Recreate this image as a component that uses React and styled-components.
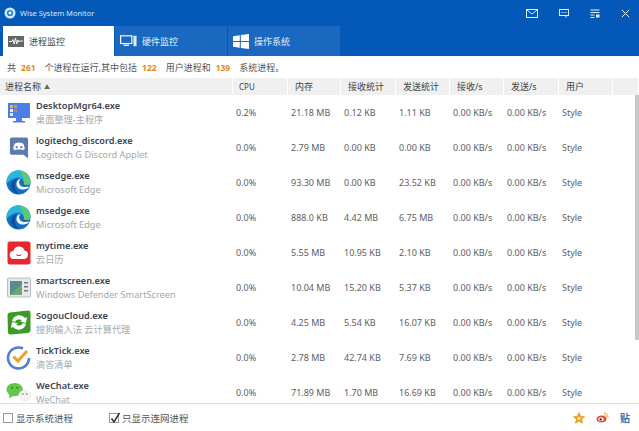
import React from 'react';
import styled, { createGlobalStyle } from 'styled-components';

const GlobalStyle = createGlobalStyle`
  html, body {
    margin: 0;
    padding: 0;
    background: #fff;
    overflow: hidden;
  }
  * { box-sizing: border-box; }
`;

const Window = styled.div`
  width: 639px;
  height: 431px;
  display: flex;
  flex-direction: column;
  font-family: "Noto Sans", "Noto Sans CJK SC", sans-serif;
  font-size: 9px;
  color: #555;
  background: #fff;
  overflow: hidden;
`;

const TitleBar = styled.div`
  height: 26px;
  flex: none;
  display: flex;
  align-items: center;
  padding-left: 4px;
  background: #0358b8;
  color: #dbe8f6;
`;

const TitleText = styled.span`
  margin-left: 4px;
  font-size: 7.5px;
`;

const TitleButtons = styled.div`
  margin-left: auto;
  display: flex;
  align-items: center;
  padding-right: 9px;
  gap: 21px;
`;

const TabBar = styled.div`
  height: 30px;
  flex: none;
  display: flex;
  gap: 1px;
  padding-left: 3px;
  background: #0358b8;
`;

const Tab = styled.div`
  width: ${props => (props.active ? '111px' : '112px')};
  display: flex;
  align-items: center;
  gap: 5px;
  padding-left: 5px;
  font-size: 9px;
  background: ${props => (props.active ? '#fff' : '#1a68c0')};
  color: ${props => (props.active ? '#444' : '#e4eefa')};
`;

const Summary = styled.div`
  height: 22px;
  flex: none;
  display: flex;
  align-items: center;
  padding-left: 7px;
  font-size: 9px;
  color: #555;
`;

const Count = styled.b`
  margin: 0 9px 0 5px;
  font-size: 8.5px;
  color: #e8861a;
  font-weight: 700;
`;

const Columns = '233px 55px 53px 55px 54px 54px 55px 54px 26px';

const HeaderRow = styled.div`
  height: 17px;
  flex: none;
  display: grid;
  grid-template-columns: ${Columns};
  background: #f0f0f0;
`;

const HeaderCell = styled.div`
  display: flex;
  align-items: center;
  padding-left: ${props => (props.first ? '5px' : props.small ? '6px' : '7px')};
  border-right: 1px solid #fff;
  font-size: ${props => (props.small ? '8px' : '9px')};
  color: #444;
`;

const SortArrow = styled.span`
  margin-left: 3px;
  font-size: 6px;
  color: #666;
`;

const Body = styled.div`
  flex: 1;
  min-height: 0;
  position: relative;
  overflow: hidden;
`;

const Row = styled.div`
  height: 35px;
  display: grid;
  grid-template-columns: ${Columns};
  align-items: center;
`;

const NameCell = styled.div`
  display: flex;
  align-items: center;
  height: 35px;
  padding-left: 6px;
  gap: 5px;
`;

const IconSlot = styled.div`
  width: 25px;
  height: 25px;
  flex: none;
  display: flex;
  align-items: center;
  justify-content: center;
`;

const NameStack = styled.div`
  display: flex;
  flex-direction: column;
  gap: 1px;
  line-height: 13px;
`;

const ProcName = styled.span`
  font-size: 9.2px;
  font-weight: 600;
  color: #3c4350;
`;

const ProcDesc = styled.span`
  font-size: 9.2px;
  color: #a5a8ad;
`;

const Cell = styled.div`
  padding-left: 3px;
  font-size: 9px;
  color: #5a6068;
  white-space: nowrap;
`;

const ScrollThumb = styled.div`
  position: absolute;
  right: 0;
  top: 0;
  width: 4px;
  height: 245px;
  background: #c8c8c8;
`;

const Footer = styled.div`
  height: 28px;
  flex: none;
  display: flex;
  align-items: center;
  padding: 0 9px 0 3px;
  border-top: 1px solid #e0e0e0;
  background: #fff;
`;

const CheckLabel = styled.label`
  display: flex;
  align-items: center;
  gap: 3px;
  width: ${props => props.width}px;
  font-size: 9.5px;
  color: #555;
`;

const CheckBox = styled.span`
  width: 10px;
  height: 10px;
  border: 1px solid #9a9a9a;
  background: #fff;
  position: relative;
  flex: none;
`;

const CheckMark = styled.svg`
  position: absolute;
  left: 0;
  top: -2px;
`;

const FooterIcons = styled.div`
  margin-left: auto;
  display: flex;
  align-items: center;
  gap: 11px;
`;

const TieLink = styled.span`
  font-size: 10px;
  font-weight: 600;
  color: #3a6ea8;
`;

const AppLogo = () => (
  <svg width="12" height="12" viewBox="0 0 14 14">
    <circle cx="7" cy="7" r="6.5" fill="#cfe6f8" />
    <circle cx="7" cy="7" r="3.6" fill="#1f7fd0" />
    <circle cx="7" cy="7" r="1.7" fill="#fff" />
  </svg>
);

const MailIcon = () => (
  <svg width="12" height="9" viewBox="0 0 12 9" fill="none" stroke="#e3eef9" strokeWidth="1">
    <rect x="0.5" y="0.5" width="11" height="8" />
    <path d="M0.5 0.8 L6 5 L11.5 0.8" />
  </svg>
);

const ChatIcon = () => (
  <svg width="10" height="9" viewBox="0 0 10 9" fill="none" stroke="#e3eef9" strokeWidth="1">
    <rect x="0.5" y="0.5" width="9" height="6" />
    <path d="M2.5 3.5h1M4.5 3.5h1M6.5 3.5h1M7 7v1.5" />
  </svg>
);

const MenuIcon = () => (
  <svg width="10" height="9" viewBox="0 0 10 9" fill="none" stroke="#e3eef9" strokeWidth="1">
    <path d="M0.5 1h9M0.5 3.5h9M0.5 6h4M0.5 8.5h4" />
    <rect x="6" y="5.5" width="3.5" height="3" fill="#e3eef9" stroke="none" />
  </svg>
);

const CloseIcon = () => (
  <svg width="9" height="9" viewBox="0 0 9 9" fill="none" stroke="#eef4fb" strokeWidth="1">
    <path d="M0.8 0.8 L8.2 8.2 M8.2 0.8 L0.8 8.2" />
  </svg>
);

const PulseIcon = () => (
  <svg width="16" height="11" viewBox="0 0 16 11">
    <rect width="16" height="11" fill="#666" />
    <path d="M1 5.5h3l1-2 1.2 4.5 1.3-6 1.3 6 1.2-4 .8 2 .8-1h3.4" fill="none" stroke="#fff" strokeWidth="0.9" />
  </svg>
);

const HardwareIcon = () => (
  <svg width="17" height="12" viewBox="0 0 19 13">
    <rect x="0.7" y="0.7" width="12.6" height="8.6" fill="none" stroke="#fff" strokeWidth="1.3" />
    <rect x="4" y="10.5" width="6" height="1.5" fill="#fff" />
    <rect x="15" y="0.5" width="3.5" height="12" rx="0.6" fill="#dfe9f5" />
  </svg>
);

const WindowsIcon = () => (
  <svg width="16" height="15" viewBox="0 0 16 15" fill="#fff">
    <path d="M0 2.2 L6.8 1.2 V7 H0 Z M7.8 1 L16 0 V7 H7.8 Z M0 8 H6.8 V13.8 L0 12.8 Z M7.8 8 H16 V15 L7.8 14 Z" />
  </svg>
);

const DesktopIcon = () => (
  <svg width="24" height="24" viewBox="0 0 24 24">
    <rect x="1" y="2" width="22" height="15" fill="#4d7de8" />
    <rect x="3" y="4" width="3" height="3" fill="#f2b632" />
    <rect x="7" y="4" width="3" height="3" fill="#6cc46c" />
    <rect x="3" y="8" width="3" height="3" fill="#e7f0ff" />
    <rect x="7" y="8" width="3" height="3" fill="#e06a5a" />
    <rect x="3" y="12" width="3" height="3" fill="#e7f0ff" />
    <path d="M9 17h6v3h3v1.5H6V20h3z" fill="#4d7de8" />
  </svg>
);

const DiscordIcon = () => (
  <svg width="20" height="24" viewBox="0 0 22 25">
    <path d="M3 1h16a2 2 0 0 1 2 2v21l-5-4H3a2 2 0 0 1-2-2V3a2 2 0 0 1 2-2z" fill="#5b7bb0" />
    <path d="M6.5 7.5c3-1.3 6-1.3 9 0 1.2 2 1.8 4 1.8 6.2-1 .8-2 1.2-3 1.4l-.8-1.2c-2 .5-3 .5-5 0l-.8 1.2c-1-.2-2-.6-3-1.4 0-2.2.6-4.2 1.8-6.2z" fill="#fff" />
    <circle cx="8.5" cy="11.5" r="1.3" fill="#5b7bb0" />
    <circle cx="13.5" cy="11.5" r="1.3" fill="#5b7bb0" />
  </svg>
);

const EdgeIcon = () => (
  <svg width="25" height="25" viewBox="0 0 25 25">
    <circle cx="12.5" cy="12.5" r="12" fill="#1270c4" />
    <path d="M0.5 12.5A12 12 0 0 1 24.5 12C24.5 15 21 15 18 14C18 9 14 7 10 8C5 9 2 12 0.5 14.5Z" fill="#2cb4dc" />
    <path d="M14 .8C20 2 24.5 7 24.5 13C24.5 15 21 15.5 18 14.5C18.5 10 17 6 14 .8Z" fill="#62c96e" />
    <path d="M15 8.5C11.5 9.5 10 12 10.5 15C11 18 14 20 18 19.5C20.5 19.2 22.5 18 23.5 16.5C21 17 17 17.5 15 16C12.5 14 12.5 10.5 15 8.5Z" fill="#fff" />
    <path d="M10.5 9.5C6 10.5 4.5 14 5 17C5.8 20.5 9 23.5 13 24.2C10 21 8.5 18 9 14.5C9.3 12.5 10 11 10.5 9.5Z" fill="#0c4f9e" />
  </svg>
);

const MytimeIcon = () => (
  <svg width="24" height="24" viewBox="0 0 24 24">
    <rect x="0.5" y="0.5" width="23" height="23" rx="2.5" fill="#e8262d" />
    <path d="M7 18a4 4 0 0 1-.6-8A5.8 5.8 0 0 1 17.5 9.5a4.3 4.3 0 0 1-.5 8.5z" fill="#fff" />
    <path d="M9.5 13.5c1 1.5 3.5 1.5 4.5 0" fill="none" stroke="#e8262d" strokeWidth="1.2" />
  </svg>
);

const SmartScreenIcon = () => (
  <svg width="24" height="22" viewBox="0 0 24 22">
    <rect x="0.5" y="1" width="23" height="19" rx="1" fill="#e6e9ec" stroke="#b8bcc0" />
    <rect x="3" y="4" width="12" height="14" fill="#5d8a8e" />
    <path d="M3 18 L15 7 V18 Z" fill="#6aa86c" />
    <rect x="17" y="5" width="4" height="1.5" fill="#70757a" />
    <rect x="17" y="9" width="4" height="1.5" fill="#70757a" />
    <rect x="17" y="13" width="4" height="1.5" fill="#70757a" />
  </svg>
);

const SogouIcon = () => (
  <svg width="24" height="25" viewBox="0 0 24 25">
    <path d="M3 2.5L21 .5Q23.5 .3 23.5 3L23.5 20Q23.5 22.5 21 23L4 24.5Q1 24.7 1 22L.5 5Q.5 2.8 3 2.5z" fill="#3c9a26" />
    <path d="M5 11a7.5 7.5 0 0 1 13-3l2-1-1 6-6-1.5 2-1a4.5 4.5 0 0 0-7 1.5z" fill="#fff" />
    <path d="M19 14a7.5 7.5 0 0 1-13 3l-2 1 1-6 6 1.5-2 1a4.5 4.500 0 0 0 7-1.5z" fill="#fff" />
  </svg>
);

const TickTickIcon = () => (
  <svg width="25" height="25" viewBox="0 0 25 25" fill="none">
    <path d="M17 3.5A10.500 10.500 0 1 0 23 13" stroke="#4b7fdc" strokeWidth="2.6" />
    <path d="M7.5 11.5 L12 16 L21 6" stroke="#f0a024" strokeWidth="3" />
  </svg>
);

const WeChatIcon = () => (
  <svg width="26" height="21" viewBox="0 0 26 21">
    <ellipse cx="9" cy="7.5" rx="8.5" ry="7" fill="#62c74a" />
    <path d="M4 12.5l-1 4 5-2.500z" fill="#62c74a" />
    <circle cx="6.3" cy="5.5" r="1.1" fill="#2f7d22" />
    <circle cx="11.7" cy="5.5" r="1.1" fill="#2f7d22" />
    <ellipse cx="19.5" cy="13.500" rx="6.3" ry="5.500" fill="#f2f3f2" stroke="#dcdfdc" strokeWidth="0.5" />
    <path d="M21.500 18l2.500 3-.5-4.500z" fill="#f2f3f2" />
    <circle cx="17.500" cy="12" r="0.9" fill="#8d918d" />
    <circle cx="21.500" cy="12" r="0.9" fill="#8d918d" />
  </svg>
);

const StarIcon = () => (
  <svg width="12" height="12" viewBox="0 0 12 12">
    <path d="M6 .5 L7.7 4.2 L11.7 4.6 L8.7 7.3 L9.6 11.3 L6 9.2 L2.4 11.3 L3.3 7.3 L.3 4.6 L4.3 4.2 Z" fill="#f0a41e" stroke="#d98a10" strokeWidth="0.5" />
    <circle cx="6" cy="6.3" r="1.6" fill="#fbe3a8" />
  </svg>
);

const WeiboIcon = () => (
  <svg width="13" height="11" viewBox="0 0 13 11">
    <ellipse cx="5.5" cy="7" rx="5" ry="3.6" fill="#e6453c" />
    <ellipse cx="5" cy="7.2" rx="2.7" ry="2" fill="#fff" />
    <circle cx="4.7" cy="7.4" r="1.2" fill="#333" />
    <path d="M8 1.2a3.8 3.8 0 0 1 4 4.5M8.3 3a2 2 0 0 1 2 2.5" fill="none" stroke="#f08a20" strokeWidth="0.9" />
  </svg>
);

const processes = [
  { name: 'DesktopMgr64.exe', desc: '桌面整理-主程序', Icon: DesktopIcon, cells: ['0.2%', '21.18 MB', '0.12 KB', '1.11 KB'] },
  { name: 'logitechg_discord.exe', desc: 'Logitech G Discord Applet', Icon: DiscordIcon, cells: ['0.0%', '2.79 MB', '0.00 KB', '0.00 KB'] },
  { name: 'msedge.exe', desc: 'Microsoft Edge', Icon: EdgeIcon, cells: ['0.0%', '93.30 MB', '0.00 KB', '23.52 KB'] },
  { name: 'msedge.exe', desc: 'Microsoft Edge', Icon: EdgeIcon, cells: ['0.0%', '888.0 KB', '4.42 MB', '6.75 MB'] },
  { name: 'mytime.exe', desc: '云日历', Icon: MytimeIcon, cells: ['0.0%', '5.55 MB', '10.95 KB', '2.10 KB'] },
  { name: 'smartscreen.exe', desc: 'Windows Defender SmartScreen', Icon: SmartScreenIcon, cells: ['0.0%', '10.04 MB', '15.20 KB', '5.37 KB'] },
  { name: 'SogouCloud.exe', desc: '搜狗输入法 云计算代理', Icon: SogouIcon, cells: ['0.0%', '4.25 MB', '5.54 KB', '16.07 KB'] },
  { name: 'TickTick.exe', desc: '滴答清单', Icon: TickTickIcon, cells: ['0.0%', '2.78 MB', '42.74 KB', '7.69 KB'] },
  { name: 'WeChat.exe', desc: 'WeChat', Icon: WeChatIcon, cells: ['0.0%', '71.89 MB', '1.70 MB', '16.69 KB'] },
];

const headers = ['CPU', '内存', '接收统计', '发送统计', '接收/s', '发送/s', '用户', ''];

export default function App() {
  return (
    <Window>
      <GlobalStyle />
      <TitleBar>
        <AppLogo />
        <TitleText>Wise System Monitor</TitleText>
        <TitleButtons>
          <MailIcon />
          <ChatIcon />
          <MenuIcon />
          <CloseIcon />
        </TitleButtons>
      </TitleBar>
      <TabBar>
        <Tab active>
          <PulseIcon />
          进程监控
        </Tab>
        <Tab>
          <HardwareIcon />
          硬件监控
        </Tab>
        <Tab>
          <WindowsIcon />
          操作系统
        </Tab>
      </TabBar>
      <Summary>
        共<Count>261</Count>个进程在运行,其中包括<Count>122</Count>用户进程和<Count>139</Count>系统进程。
      </Summary>
      <HeaderRow>
        <HeaderCell first>
          进程名称<SortArrow>▲</SortArrow>
        </HeaderCell>
        {headers.map((title, i) => (
          <HeaderCell key={i} small={title === 'CPU'}>{title}</HeaderCell>
        ))}
      </HeaderRow>
      <Body>
        {processes.map((proc, i) => (
          <Row key={i}>
            <NameCell>
              <IconSlot>
                <proc.Icon />
              </IconSlot>
              <NameStack>
                <ProcName>{proc.name}</ProcName>
                <ProcDesc>{proc.desc}</ProcDesc>
              </NameStack>
            </NameCell>
            {proc.cells.map((value, j) => (
              <Cell key={j}>{value}</Cell>
            ))}
            <Cell>0.00 KB/s</Cell>
            <Cell>0.00 KB/s</Cell>
            <Cell>Style</Cell>
          </Row>
        ))}
        <ScrollThumb />
      </Body>
      <Footer>
        <CheckLabel width={106}>
          <CheckBox />
          显示系统进程
        </CheckLabel>
        <CheckLabel width={110}>
          <CheckBox>
            <CheckMark width="11" height="12" viewBox="0 0 11 12" fill="none" stroke="#333" strokeWidth="1.5">
              <path d="M1.5 6.5 L4 10 L9.5 1" />
            </CheckMark>
          </CheckBox>
          只显示连网进程
        </CheckLabel>
        <FooterIcons>
          <StarIcon />
          <WeiboIcon />
          <TieLink>贴</TieLink>
        </FooterIcons>
      </Footer>
    </Window>
  );
}
